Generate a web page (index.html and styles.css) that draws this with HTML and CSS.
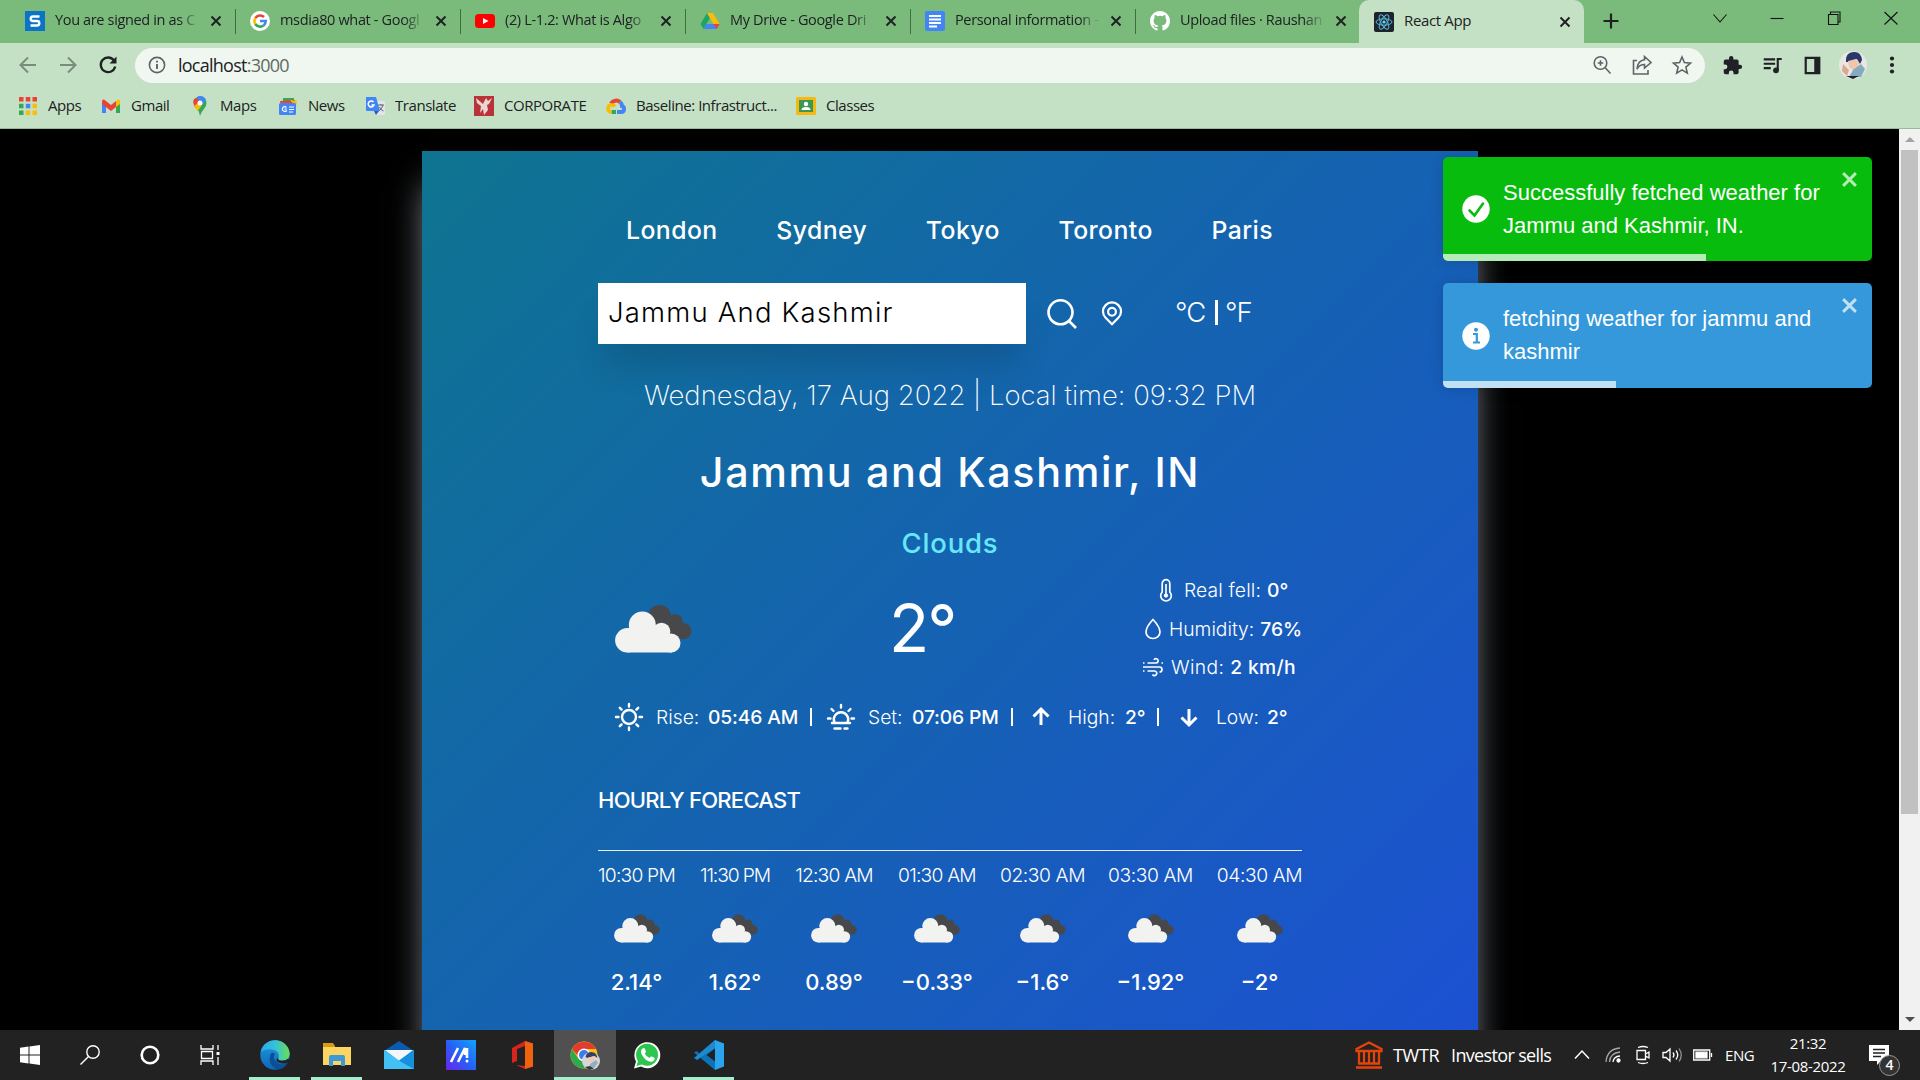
FILE: index.html
```html
<!DOCTYPE html>
<html lang="en">
<head>
<meta charset="utf-8">
<title>React App</title>
<link rel="stylesheet" href="styles.css">
</head>
<body>
<svg class="defs" width="0" height="0">
  <defs>
    <symbol id="x" viewBox="0 0 12 12"><path d="M1.500 1.500l9 9M10.500 1.500l-9 9" stroke="currentColor" stroke-width="2" fill="none"/></symbol>
    <symbol id="clouds" viewBox="0 0 77 48">
      <g fill="#48484a"><circle cx="44.500" cy="11.500" r="11.500"/><circle cx="60.500" cy="16" r="7"/><circle cx="68.500" cy="26.200" r="8"/><path d="M40 12h22l7 6v16H50z"/></g>
      <g fill="#f2f2f0"><circle cx="12.300" cy="35.300" r="12.200"/><circle cx="27.300" cy="20" r="13.500"/><circle cx="46.500" cy="26.500" r="8.800"/><circle cx="56" cy="38" r="9.500"/><path d="M12 47.500V24l14-5 15 2 8 8 8 8v10.500z"/></g>
    </symbol>
    <linearGradient id="edgeA" x1="0" y1="0" x2="1" y2="0"><stop offset="0" stop-color="#2aa9e8"/><stop offset=".5" stop-color="#35c1d9"/><stop offset="1" stop-color="#6bdd55"/></linearGradient>
    <linearGradient id="edgeB" x1="0" y1="0" x2="0" y2="1"><stop offset="0" stop-color="#1b9de2"/><stop offset="1" stop-color="#0f66b8"/></linearGradient>
    <linearGradient id="mBg" x1="0" y1="1" x2="1" y2="0"><stop offset="0" stop-color="#6a22ee"/><stop offset=".5" stop-color="#2463f5"/><stop offset="1" stop-color="#14a4fb"/></linearGradient>
  </defs>
</svg>

<header class="tabs">
  <div class="tab">
    <svg class="fav" viewBox="0 0 20 20"><path fill="#0b74c9" d="M0 0h20v20H0z"/><path d="M14.500 5.500H8q-2.300 0-2.300 2.200T8 10h4q2.300 0 2.300 2.200T12 14.500H5.500" fill="none" stroke="#fff" stroke-width="2.400"/></svg>
    <span class="tab-title">You are signed in as C</span><svg class="tab-x"><use href="#x"/></svg>
  </div>
  <div class="tab">
    <svg class="fav" viewBox="0 0 20 20"><circle cx="10" cy="10" r="10" fill="#fff"/><g fill="none" stroke-width="2.600"><path d="M5.400 7A5.700 5.700 0 0 1 14 6" stroke="#ea4335"/><path d="M5.300 13A5.700 5.700 0 0 1 5.400 7" stroke="#fbbc05"/><path d="M13.600 14.400A5.700 5.700 0 0 1 5.300 13" stroke="#34a853"/><path d="M10 10h5.700a5.700 5.700 0 0 1-2.100 4.400" stroke="#4285f4"/></g></svg>
    <span class="tab-title">msdia80 what - Googl</span><svg class="tab-x"><use href="#x"/></svg>
  </div>
  <div class="tab">
    <svg class="fav" viewBox="0 0 20 20"><rect y="3" width="20" height="14" rx="3.500" fill="#f00"/><path d="M8 7l5.500 3L8 13z" fill="#fff"/></svg>
    <span class="tab-title">(2) L-1.2: What is Algo</span><svg class="tab-x"><use href="#x"/></svg>
  </div>
  <div class="tab">
    <svg class="fav" viewBox="0 0 20 20"><path d="M7 2L.5 13l3 5L10 7z" fill="#1fa463"/><path d="M7 2h6l6.500 11h-6z" fill="#fbbc05"/><path d="M3.500 18l3-5h13l-3 5z" fill="#4285f4"/><path d="M16.500 18l-3-5h6z" fill="#ea4335"/></svg>
    <span class="tab-title">My Drive - Google Dri</span><svg class="tab-x"><use href="#x"/></svg>
  </div>
  <div class="tab">
    <svg class="fav" viewBox="0 0 20 20"><rect width="20" height="20" rx="2" fill="#4285f4"/><path d="M4 5h12M4 8.500h12M4 12h12M4 15.500h8" stroke="#fff" stroke-width="1.800"/></svg>
    <span class="tab-title">Personal information -</span><svg class="tab-x"><use href="#x"/></svg>
  </div>
  <div class="tab tab-last">
    <svg class="fav" viewBox="0 0 16 16"><path fill="#fff" d="M8 0C3.580 0 0 3.580 0 8c0 3.540 2.290 6.530 5.470 7.590.4.070.55-.17.55-.38 0-.19-.01-.82-.01-1.490-2.010.37-2.530-.49-2.690-.94-.09-.23-.48-.94-.82-1.130-.28-.15-.68-.52-.01-.53.63-.01 1.080.58 1.230.82.72 1.210 1.870.87 2.330.66.070-.52.28-.87.51-1.070-1.780-.2-3.640-.89-3.640-3.950 0-.87.31-1.590.82-2.150-.08-.2-.36-1.020.08-2.120 0 0 .67-.21 2.200.82a7.600 7.600 0 0 1 4 0c1.530-1.040 2.200-.82 2.200-.82.44 1.100.16 1.920.08 2.120.51.56.82 1.270.82 2.150 0 3.070-1.870 3.750-3.650 3.950.29.25.54.73.54 1.480 0 1.070-.01 1.930-.01 2.200 0 .21.15.46.55.38A8 8 0 0 0 16 8c0-4.420-3.580-8-8-8z"/></svg>
    <span class="tab-title">Upload files · Raushan</span><svg class="tab-x"><use href="#x"/></svg>
  </div>
  <div class="tab active">
    <svg class="fav" viewBox="0 0 20 20"><rect width="20" height="20" rx="2" fill="#20232a"/><g fill="none" stroke="#53b9dc" stroke-width="1"><ellipse cx="10" cy="10" rx="8" ry="3.200"/><ellipse cx="10" cy="10" rx="8" ry="3.200" transform="rotate(60 10 10)"/><ellipse cx="10" cy="10" rx="8" ry="3.200" transform="rotate(120 10 10)"/></g><circle cx="10" cy="10" r="1.600" fill="#61dafb"/></svg>
    <span class="tab-title whole">React App</span><svg class="tab-x"><use href="#x"/></svg>
  </div>
  <svg class="new-tab" viewBox="0 0 16 16"><path d="M8 .5v15M.5 8h15" stroke="#202124" stroke-width="2.200"/></svg>
  <div class="win-controls">
    <svg viewBox="0 0 16 16"><path d="M1.500 4.500L8 12l6.500-7.500" /></svg>
    <svg viewBox="0 0 16 16"><path d="M1.500 8.500h13"/></svg>
    <svg viewBox="0 0 16 16"><path d="M2.500 4.500h9.500v10H2.500zM4.500 4.500v-2.500h9.500v10h-2"/></svg>
    <svg viewBox="0 0 16 16"><path d="M1.500 2l13 12.500M14.500 2l-13 12.500"/></svg>
  </div>
</header>

<div class="toolbar">
  <svg class="nav-ic dim" viewBox="0 0 20 20"><path d="M18 10H3M10 2.500L2.500 10l7.500 7.500"/></svg>
  <svg class="nav-ic dim" viewBox="0 0 20 20"><path d="M2 10h15M10 2.500l7.500 7.500-7.500 7.500"/></svg>
  <svg class="nav-ic" viewBox="0 0 20 20"><path d="M16 5.500A7.300 7.300 0 1 0 17.200 11.500" stroke-width="2.300"/><path d="M18.500 1.500v7h-7z" fill="#202124" stroke="none"/></svg>
  <div class="omnibox">
    <svg class="info" viewBox="0 0 18 18"><circle cx="9" cy="9" r="7.600" fill="none" stroke="#5f6368" stroke-width="1.600"/><path d="M9 8v5M9 4.800v1.800" stroke="#5f6368" stroke-width="1.900"/></svg>
    <span class="url">localhost<span>:3000</span></span>
    <svg class="omni-ic" viewBox="0 0 20 20"><circle cx="8.500" cy="8" r="6.300"/><path d="M13 12.500l5.500 6M8.500 5.200v5.600M5.700 8h5.600"/></svg>
    <svg class="omni-ic" viewBox="0 0 20 20"><path d="M5 5.500H1.500V19h14.500v-4" /><path d="M12.500 1.500L19 7.500l-6.500 5.500v-3.500q-5 0-7.500 4.500.8-8.500 7.500-9.200z"/></svg>
    <svg class="omni-ic" viewBox="0 0 20 20"><path d="M10 2l2.400 5.600 6.100.5-4.600 4 1.400 6L10 14.900 4.700 18.100l1.400-6-4.600-4 6.100-.5z"/></svg>
  </div>
  <svg class="ext puzzle" viewBox="0 0 24 24"><path fill="#202124" d="M20.500 11H19V7a2 2 0 0 0-2-2h-4V3.500a2.500 2.500 0 0 0-5 0V5H4a2 2 0 0 0-2 2v3.800h1.500a2.700 2.700 0 0 1 0 5.400H2V20a2 2 0 0 0 2 2h3.800v-1.500a2.700 2.700 0 0 1 5.400 0V22H17a2 2 0 0 0 2-2v-4h1.500a2.500 2.500 0 0 0 0-5z"/></svg>
  <svg class="ext" viewBox="0 0 24 24"><path d="M2 5h13M2 10h13M2 15h8" stroke="#202124" stroke-width="2.300"/><path d="M18 17V4.500h4.500" fill="none" stroke="#202124" stroke-width="2.400"/><circle cx="16" cy="17.500" r="3.300" fill="#202124"/></svg>
  <svg class="ext" viewBox="0 0 24 24"><path d="M3 2h18v20H3zM5.500 4.500v15H14v-15z" fill="#202124" fill-rule="evenodd"/></svg>
  <svg class="avatar" viewBox="0 0 28 28"><circle cx="14" cy="14" r="14" fill="#e9e6e4"/><path d="M7 11Q6 2 14 1t9 8l-2 4-3-5-9 3z" fill="#28386b"/><path d="M9 10l8-2 3 4-1 5-4 3-5-4z" fill="#efc6a9"/><path d="M14 19l8-6 4 5-4 8H10z" fill="#85abc0"/><path d="M4 13l6 6-2 6-5-5z" fill="#d9a98f"/><path d="M7 25h13l-6 3z" fill="#20242c"/></svg>
  <svg class="dots" viewBox="0 0 6 20"><circle cx="3" cy="3.500" r="2.100"/><circle cx="3" cy="10" r="2.100"/><circle cx="3" cy="16.500" r="2.100"/></svg>
</div>

<nav class="bookmarks">
  <a class="w-apps"><svg viewBox="0 0 20 20"><g fill="#ea4335"><path d="M1 1h4.500v4.500H1zM7.800 1h4.500v4.500H7.800zM14.500 1H19v4.500h-4.500z"/></g><path fill="#34a853" d="M1 7.800h4.500v4.500H1zM1 14.500h4.500V19H1z"/><path fill="#4285f4" d="M7.800 7.800h4.500v4.500H7.800z"/><path fill="#fbbc05" d="M14.500 7.800H19v4.500h-4.500zM7.800 14.500h4.500V19H7.800zM14.500 14.500H19V19h-4.500z"/></svg><span>Apps</span></a>
  <a class="w-gmail"><svg viewBox="0 0 20 20"><path d="M1 5v12h4V9z" fill="#4285f4"/><path d="M19 5v12h-4V9z" fill="#34a853"/><path d="M15 5l2-1.500q2-.5 2 2V8l-4 3z" fill="#fbbc04"/><path d="M1 8V5.500q0-2.500 2-2L10 9l5-4v6l-5 4z" fill="#ea4335"/></svg><span>Gmail</span></a>
  <a class="w-maps"><svg viewBox="0 0 20 20"><path d="M10 20Q9 14 5 10.500 2 4 6.500 1.500 10-1 14 2q5 5 0 11-3 3-4 7z" fill="#34a853"/><path d="M4 9Q2 4 5 2.500l10 0Q9 7 5.500 12z" fill="#ea4335"/><path d="M7 1q6-3 9 3l-5 6z" fill="#4285f4"/><path d="M4.500 10l4-4 3 4L7.500 15z" fill="#fbbc04"/><circle cx="10" cy="7" r="2.500" fill="#fff"/></svg><span>Maps</span></a>
  <a class="w-news"><svg viewBox="0 0 20 20"><path d="M5 2h11v6H5z" fill="#34a853"/><path d="M2 5l15-1 1 6H3z" fill="#ea4335"/><path d="M12 4l7 1-1 6z" fill="#fbbc04"/><rect x="1" y="7" width="17" height="12" rx="1.500" fill="#4285f4"/><path d="M11 11h5M11 13.500h5M11 16h4M9 13H6.500M8.500 11.300a2.400 2.400 0 1 0 .3 3" fill="none" stroke="#fff" stroke-width="1.200"/></svg><span>News</span></a>
  <a class="w-trans"><svg viewBox="0 0 20 20"><path d="M8 5h11q1 0 1 1v12q0 1-1 1h-7z" fill="#e1e4e8"/><path d="M1 1h10l4 14H2q-1 0-1-1z" fill="#4285f4"/><path d="M9 15h5l-3 4z" fill="#2a56c6"/><path d="M8.500 6A3 3 0 1 0 9 9H6.500" fill="none" stroke="#fff" stroke-width="1.500"/><path d="M13 9h6M16 8v1.500M18 9q-1 4-4 6M14.500 11q1 3 4 4" fill="none" stroke="#667" stroke-width="1"/></svg><span>Translate</span></a>
  <a class="w-corp"><svg viewBox="0 0 20 20"><path d="M0 0h20v20H0z" fill="#b93438"/><path d="M2 2l7 6 1-2 2-4 2 3 4-3-3 6-2 1 1 5-4 5-1-6-3 4 1-7-4-3z" fill="#ecd5d3"/></svg><span>CORPORATE</span></a>
  <a class="w-base"><svg viewBox="0 0 20 20"><g fill="none" stroke-width="4"><path d="M5 7.500A6 6 0 0 1 14 6" stroke="#ea4335"/><path d="M14 6q2 1.500 2 4 2 .5 2 3 0 3-3 3h-4" stroke="#4285f4"/><path d="M10 16H5.500" stroke="#34a853"/><path d="M5.500 16Q2 16 2 12.500T6 9q2 0 3 1.500" stroke="#fbbc05" stroke-width="3.600"/></g></svg><span>Baseline: Infrastruct...</span></a>
  <a><svg viewBox="0 0 20 20"><rect y="1" width="20" height="18" rx="1.500" fill="#f5b912"/><path d="M3 4h14v12H3z" fill="#3c9850"/><circle cx="10" cy="8" r="2.200" fill="#fff"/><path d="M5.500 14q0-3 4.500-3t4.500 3z" fill="#fff"/></svg><span>Classes</span></a>
</nav>

<div class="viewport">
  <main class="page">
    <section class="card">
      <div class="cities"><button>London</button><button>Sydney</button><button>Tokyo</button><button>Toronto</button><button>Paris</button></div>
      <div class="search">
        <div class="field">Jammu And Kashmir</div>
        <svg class="glass" viewBox="0 0 30 30"><circle cx="13.500" cy="13.300" r="12"/><path d="M22 22l7 7"/></svg>
        <svg class="pin" viewBox="0 0 20 24"><path d="M10 22.300L3.600 15.800a9 9 0 1 1 12.800 0z"/><circle cx="10" cy="9.800" r="3.900"/></svg>
        <div class="units"><span>°C</span><i></i><span>°F</span></div>
      </div>
      <p class="date">Wednesday, 17 Aug 2022 | Local time: 09:32 PM</p>
      <h1 class="place">Jammu and Kashmir, IN</h1>
      <p class="sky">Clouds</p>
      <div class="now">
        <svg class="now-icon"><use href="#clouds"/></svg>
        <p class="temp">2<span>°</span></p>
        <div class="details">
          <p class="feel"><svg viewBox="0 0 20 22"><path d="M6.200 13V4.500a3.800 3.800 0 0 1 7.600 0V13a5.300 5.300 0 1 1-7.600 0z"/><path d="M10 5v11"/><circle cx="10" cy="16.500" r="1.700" fill="#fff" stroke-width="1"/></svg><span>Real fell:</span><b>0°</b></p>
          <p class="hum"><svg viewBox="0 0 20 22"><path d="M10 1.500Q17 9 17 14a7 6.500 0 0 1-14 0Q3 9 10 1.500z"/></svg><span>Humidity:</span><b>76%</b></p>
          <p class="wind"><svg viewBox="0 0 22 22"><path d="M1 7h1.500M5.500 7h8.500a2.200 2.200 0 1 0-2-3.200M1 11h16.500a2.300 2.300 0 1 1 0 5M19.500 7h1.500M1 15h1.500M5.500 15h7a2.300 2.300 0 1 1-2 3.500"/></svg><span>Wind:</span><b>2 km/h</b></p>
        </div>
      </div>
      <div class="stats">
        <svg viewBox="0 0 28 28"><circle cx="14" cy="14" r="7"/><path d="M14 1v2.500M14 24.500V27M1 14h2.500M24.500 14H27M4.800 4.800l1.800 1.800M21.400 21.400l1.800 1.800M4.800 23.200l1.800-1.800M21.400 6.600l1.800-1.800"/></svg>
        <span>Rise:</span><b class="am">05:46 AM</b><i></i>
        <svg viewBox="0 0 28 28"><path d="M7.500 19.500a7.200 7.200 0 1 1 13 0M5 20h18M7.500 25.500h6M17.500 25.500h3M14 2v2.500M1 15.500h2.500M24.500 15.500H27M4.500 6l2 2M23.500 6l-2 2"/></svg>
        <span>Set:</span><b class="pm">07:06 PM</b><i></i>
        <svg class="arrow" viewBox="0 0 28 28"><path d="M10 22V7M2.500 13.500L10 6l7.500 7.500"/></svg>
        <span>High:</span><b>2°</b><i></i>
        <svg class="arrow" viewBox="0 0 28 28"><path d="M10 6v15M2.500 14.500L10 22l7.500-7.500"/></svg>
        <span>Low:</span><b>2°</b>
      </div>
      <h2 class="heading">HOURLY FORECAST</h2>
      <div class="hours">
        <div><span>10:30 PM</span><svg><use href="#clouds"/></svg><b>2.14°</b></div>
        <div><span>11:30 PM</span><svg><use href="#clouds"/></svg><b>1.62°</b></div>
        <div><span>12:30 AM</span><svg><use href="#clouds"/></svg><b>0.89°</b></div>
        <div><span>01:30 AM</span><svg><use href="#clouds"/></svg><b>−0.33°</b></div>
        <div><span>02:30 AM</span><svg><use href="#clouds"/></svg><b>−1.6°</b></div>
        <div><span>03:30 AM</span><svg><use href="#clouds"/></svg><b>−1.92°</b></div>
        <div><span>04:30 AM</span><svg><use href="#clouds"/></svg><b>−2°</b></div>
      </div>
    </section>
  </main>
  <div class="scrollbar"><i class="up"></i><div class="thumb"></div><i class="down"></i></div>
  <aside class="toasts">
    <div class="toast ok">
      <svg class="t-ic" viewBox="0 0 28 28"><circle cx="14" cy="14" r="13.700" fill="#fff"/><path d="M7.500 15.500l5 5 8.500-12" fill="none" stroke="#07bc0c" stroke-width="2.600" stroke-linecap="round"/></svg>
      <p>Successfully fetched weather for<br>Jammu and Kashmir, IN.</p>
      <svg class="t-x"><use href="#x"/></svg><div class="bar" style="width:263px"></div>
    </div>
    <div class="toast note">
      <svg class="t-ic" viewBox="0 0 28 28"><circle cx="14" cy="14" r="13.700" fill="#fff"/><circle cx="14" cy="7.800" r="2" fill="#3498db"/><path d="M11 12h3.800v8M11 20.500h7" fill="none" stroke="#3498db" stroke-width="2.200"/></svg>
      <p>fetching weather for jammu and<br>kashmir</p>
      <svg class="t-x"><use href="#x"/></svg><div class="bar" style="width:173px"></div>
    </div>
  </aside>
</div>

<footer class="taskbar">
  <div class="slot"><svg viewBox="0 0 20 20"><path fill="#fff" d="M0 2.800L8.500 1.500v8H0zM9.500 1.400L20 0v9.500H9.500zM0 10.500h8.500v8L0 17.300zM9.500 10.500H20V20L9.500 18.600z"/></svg></div>
  <div class="slot"><svg viewBox="0 0 20 20"><circle cx="13" cy="7" r="6.200" fill="none" stroke="#fff" stroke-width="1.400"/><path d="M8.500 11.500L.5 19.500" stroke="#fff" stroke-width="1.500"/></svg></div>
  <div class="slot"><svg viewBox="0 0 20 20"><circle cx="10" cy="10" r="8.300" fill="none" stroke="#fff" stroke-width="2.600"/></svg></div>
  <div class="slot"><svg viewBox="0 0 20 20"><path d="M1 0v4h12V0M1 20v-4h12v4M1.500 6.500h11v7h-11zM18 0v5M18 12v8" fill="none" stroke="#fff" stroke-width="1.300"/><path d="M16.500 7h3v3h-3z" fill="#fff"/></svg></div>
  <div class="slot app run first"><svg viewBox="0 0 30 30"><circle cx="15" cy="15" r="14.700" fill="url(#edgeB)"/><path d="M.6 12A14.700 14.700 0 0 1 29.700 14Q29 20.500 22 20.500 17 20 18.500 17.500 20 11 12 9.500 5 8.500.6 12z" fill="url(#edgeA)"/><path d="M10.500 14Q7 24 16 29q8 .5 11.500-6-6 3-10.500-.5-5-4-2-9Q12 12 10.500 14z" fill="#0c4f96"/><path d="M18.500 17.500Q16.500 20.500 22 20.800q4 0 6.500-2l1.500 2-3 2.300q-6 1.500-10-1.500-1.500-2.500 1.500-4.100z" fill="#222"/></svg></div>
  <div class="slot app run"><svg viewBox="0 0 30 30"><path d="M1 3h10l2 3v4H1z" fill="#d99b10"/><path d="M1 7h28v18H1z" fill="#fcd462"/><path d="M7 26V17q0-2 2-2h12q2 0 2 2v9h-4v-5h-8v5z" fill="#3f98d6"/></svg></div>
  <div class="slot app"><svg viewBox="0 0 30 30"><path d="M0 11L15 1l15 10z" fill="#0a5aad"/><path d="M0 10h30v19H0z" fill="#1d9de2"/><path d="M1 10h28L15 21z" fill="#f4f6f8"/><path d="M0 10l15 10.500L30 29H0z" fill="#43c0f4"/><path d="M30 10v19L15 20.500z" fill="#168fdc"/></svg></div>
  <div class="slot app"><svg viewBox="0 0 30 30"><path d="M0 0h30v30H0z" fill="url(#mBg)"/><path d="M5 22L12 8M12 22l7-14v7M21 8v10" fill="none" stroke="#fff" stroke-width="2.600"/><circle cx="21" cy="21" r="1.500" fill="#fff"/></svg></div>
  <div class="slot app"><svg viewBox="0 0 30 30"><path d="M4 8L17 1l8 2.500v23L17 29 8 25l9 1V6L9 9v12l-5 2z" fill="#d5251c"/><path d="M17 1l8 2.500v23L17 29z" fill="#f1620f"/></svg></div>
  <div class="slot app run on"><svg viewBox="0 0 30 30"><circle cx="14" cy="15" r="13.500" fill="#fbc116"/><path d="M2 9A13.500 13.500 0 0 1 26 9H14l-5 8z" fill="#e33b2e"/><path d="M2 9A13.500 13.500 0 0 0 14 28.500l5-9H9z" fill="#2da94f"/><circle cx="14" cy="15" r="6.500" fill="#fff"/><circle cx="14" cy="15" r="5" fill="#3b7ded"/><circle cx="21" cy="21" r="9" fill="#d9d6d8"/><path d="M15.500 17q1-5 6-5t6 6l-3-2-7 2z" fill="#33405f"/><path d="M17 18l7-2 1 5-4 3z" fill="#f0cbb4"/><path d="M20 24l6-4 2 3-4 5-4 1z" fill="#8fb0c4"/><path d="M15 27l5-1 4 3-5 1z" fill="#343a43"/></svg></div>
  <div class="slot app"><svg viewBox="0 0 30 30"><path d="M2 28.500l2-7A13 13 0 1 1 9 26.500z" fill="#fff"/><path d="M4.500 26l1.500-5A11 11 0 1 1 10 24.500z" fill="#2cc64f"/><path d="M10 9q2-2 3 0l1 3-1.300 1.800q2 3.200 4.800 4.200l1.700-1.800 3.300 1.500q.5 3-3 4Q14 22 10 15q-2-4 0-6z" fill="#fff"/></svg></div>
  <div class="slot app run"><svg viewBox="0 0 30 30"><path d="M21 0L6 14 2.500 11 0 12.500 21 30z" fill="#0d73b9"/><path d="M0 18L21 0v8L3 20z" fill="#1b8ad2"/><path d="M21 0l9 3.500v23L21 30z" fill="#2ba4ee"/><path d="M21 8.500v13L12.500 15z" fill="#222"/></svg></div>
  <div class="tray">
    <svg class="bank" viewBox="0 0 28 28"><path d="M1.500 10V8L14 1.500 26.500 8v2zM4 10.500v12M9 10.500v12M14 10.500v12M19 10.500v12M24 10.500v12M3 22.500h22M1 26.500h26" /></svg>
    <span class="news">TWTR</span><span class="news sells">Investor sells</span>
    <svg class="chev" viewBox="0 0 16 16"><path d="M1 11.500L8 4l7 7.500" stroke-width="1.500"/></svg>
    <svg class="wifi" viewBox="0 0 16 16"><path d="M1 15Q2 2 15 1M4.500 15Q5 6 15 5" opacity=".6"/><path d="M8 15q.5-5.500 7-6"/><circle cx="13.500" cy="13.500" r="1.500" fill="#fff"/></svg>
    <svg class="meet" viewBox="0 0 16 18"><path d="M2 4.500h8.500v9H2zM10.500 8l3.500-2v6l-3.500-2M3 1.500q5-2 10 0M3 16.500q5 2 10 0"/></svg>
    <svg class="vol" viewBox="0 0 20 16"><path d="M1 5.500h3L8 2v12l-4-3.500H1zM11 5.500q2 2.500 0 5M14 3.500q3.500 4.500 0 9"/><path d="M17 1.500q4.500 6.500 0 13" opacity=".5"/></svg>
    <svg class="bat" viewBox="0 0 20 12"><path d="M.7 1h16v10H.7zM18.500 4v4"/><path d="M3 3.200h11v5.600H3z" fill="#fff"/></svg>
    <span class="lang">ENG</span>
    <div class="clock"><span>21:32</span><span class="day">17-08-2022</span></div>
    <div class="action"><svg viewBox="0 0 20 20"><path d="M0 0h20v16h-8l-4 4v-4H0z" fill="#fff"/><path d="M4 4.500h12M4 8h12M4 11.500h8" stroke="#222" stroke-width="1.300"/></svg><span>4</span></div>
  </div>
</footer>
</body>
</html>
```
FILE: styles.css
```css
*{box-sizing:border-box;margin:0;padding:0}
html,body{height:100%}
body{width:1920px;height:1080px;overflow:hidden;background:#000;display:flex;flex-direction:column;font-family:"Open Sans","Noto Sans",sans-serif;color:#202124}
svg{display:block;flex:none;overflow:visible}
.defs{position:absolute}

.tabs{height:43px;flex:none;background:#7abb7c;display:flex;padding-left:10px}
.tab{width:225px;height:42px;display:flex;align-items:center;padding-left:15px;position:relative;flex:none}
.tab::after{content:"";position:absolute;right:-1px;top:9px;width:1px;height:25px;background:#3f6e43}
.tab-last::after,.active::after{display:none}
.active{background:#c5e1c5;height:43px;border-radius:10px 10px 0 0;margin-left:-1px}
.fav{width:20px;height:20px}
.tab-title{margin:-3px 0 0 10px;width:147px;overflow:hidden;white-space:nowrap;font-size:14.5px;letter-spacing:-.35px;-webkit-mask-image:linear-gradient(90deg,#000 84%,transparent 99%);mask-image:linear-gradient(90deg,#000 84%,transparent 99%)}
.whole{-webkit-mask-image:none;mask-image:none;font-size:15px}
.tab-x{width:12px;height:12px;margin-left:8px}
.new-tab{width:16px;height:16px;margin:13px 0 0 19px}
.win-controls{display:flex;margin-left:93px;gap:41px;padding-top:10px}
.win-controls svg{width:16px;height:16px;fill:none;stroke:#111;stroke-width:1.1}

.toolbar{height:44px;flex:none;background:#c5e1c5;display:flex;align-items:center;padding-left:18px}
.nav-ic{width:20px;height:20px;margin-right:20px;fill:none;stroke:#202124;stroke-width:2}
.dim{opacity:.45}
.omnibox{width:1570px;height:35px;margin-left:-3px;border-radius:18px;background:#f0f7f0;display:flex;align-items:center;padding:0 13px}
.info{width:18px;height:18px}
.url{font-size:18px;letter-spacing:-.75px;margin-left:12px;flex:1}
.url span{color:#5f6b62}
.omni-ic{width:20px;height:20px;margin-left:20px;fill:none;stroke:#5f6368;stroke-width:1.6}
.ext{width:21px;height:21px;margin-left:19px}
.puzzle{margin-left:17px}
.avatar{width:28px;height:28px;margin-left:16px}
.dots{width:6px;height:20px;margin-left:22px;fill:#202124}

.bookmarks{height:42px;flex:none;background:#c5e1c5;border-bottom:1px solid #9fb5a0;display:flex;padding-left:18px}
.bookmarks a{display:flex;align-items:center;gap:10px;font-size:15px;letter-spacing:-.45px;height:38px;white-space:nowrap}
.bookmarks svg{width:20px;height:20px}
.bookmarks span{margin-top:-2px}
.w-apps{width:83px}.w-gmail{width:89px}.w-maps{width:88px}.w-news{width:87px}.w-trans{width:109px}.w-corp{width:132px}.w-base{width:190px}

.viewport{height:901px;flex:none;display:flex;position:relative;overflow:hidden}
.page{width:1899px;padding:22px 0 0 422px;overflow:hidden;background:#000}
.card{width:1056px;height:1050px;padding:47px 176px 0;background:linear-gradient(to bottom right,#0e7490,#1d4ed8);box-shadow:0 27px 34px -7px #9ca3af;color:#fff;font-family:Inter,"Noto Sans",sans-serif}
.cities{height:64px;display:flex;justify-content:space-between;align-items:center;padding:0 29px 0 28px}
.cities button{border:0;background:none;color:#fff;font:500 24.75px Inter,sans-serif;letter-spacing:.45px}
.search{height:61px;margin-top:21px;display:flex;align-items:center}
.field{width:428px;height:61px;background:#fff;color:#000;font-size:27.5px;font-weight:300;line-height:59px;padding-left:10px;box-shadow:0 27px 34px -7px rgba(0,0,0,.14);letter-spacing:1.2px}
.glass{width:30px;height:30px;margin-left:21px;fill:none;stroke:#fff;stroke-width:2.6}
.pin{width:20px;height:24px;margin-left:25px;fill:none;stroke:#fff;stroke-width:2.2}
.units{display:flex;align-items:center;margin-left:53px;font-size:27.5px;font-weight:300;margin-top:-3px}
.units span{width:33px;letter-spacing:-1px}
.units i{width:3px;height:25px;background:#fff;margin:0 7px 0 7px}
.date{height:50px;line-height:50px;margin-top:26px;font-size:27.5px;font-weight:200;text-align:center;white-space:nowrap}
.place{height:54px;line-height:54px;margin-top:25px;font-size:41.25px;font-weight:500;text-align:center;white-space:nowrap;letter-spacing:1.65px}
.sky{height:40px;line-height:40px;margin-top:24px;color:#67e8f9;font-size:27.5px;font-weight:500;text-align:center;letter-spacing:.8px}
.now{height:117px;margin-top:7px;display:flex;align-items:center}
.now-icon{width:77px;height:48px;margin-left:17px}
.temp{width:200px;margin:-2px 0 0 197px;font-size:66px;line-height:80px;font-weight:400;letter-spacing:-2px}
.details{width:160px;margin-left:53px;font-size:19.25px;font-weight:300}
.details p{display:flex;align-items:center;height:38.5px;white-space:nowrap}
.details svg{width:22px;height:22px;margin-right:5px;fill:none;stroke:#fff;stroke-width:1.7}
b{font-weight:500}
.details b{margin-left:6px}
.details .feel{padding-left:13px;letter-spacing:.15px}
.feel svg,.wind svg{margin-right:7px}
.wind{letter-spacing:.35px}
.stats{height:34px;margin-top:13px;padding-left:17px;display:grid;align-items:center;grid-template-columns:41px 52px 102px 17px 41px 44px 99px 20px 37px 57px 32px 22px 37px 51px 40px;font-size:19.25px;font-weight:300;white-space:nowrap}
.stats svg{width:28px;height:28px;fill:none;stroke:#fff;stroke-width:2.4;stroke-linecap:round}
.stats .arrow{stroke-width:3;stroke-linecap:butt}
.stats b{letter-spacing:-.15px}
.stats i{width:1.5px;height:18px;background:#fff}
.heading{font-size:22px;font-weight:500;height:40px;line-height:40px;margin-top:46px;letter-spacing:-.75px}
.hours{border-top:1px solid #e8edf4;margin-top:30px;padding-top:10px;display:grid;justify-content:space-between;grid-template-columns:77px 71px 78px 79px 83px 84px 85px}
.hours div{display:flex;flex-direction:column;align-items:center}
.hours span{font-size:19.25px;line-height:29px;font-weight:300;white-space:nowrap;letter-spacing:-.4px}
.hours div:nth-child(-n+4) span{letter-spacing:-.8px}
.hours div:nth-child(2) span{letter-spacing:-1.1px}
.hours svg{width:46px;height:29px;margin-top:24px}
.hours b{font-size:22px;line-height:33px;margin-top:23px}

.scrollbar{width:21px;background:#f1f1f1;display:flex;flex-direction:column;align-items:center;padding:8px 0}
.up,.down{border:5px solid transparent;border-top:0;border-bottom:5px solid #a3a3a3}
.down{border-top:5px solid #505050;border-bottom:0;margin-top:auto}
.thumb{width:17px;height:664px;background:#c1c1c1;margin-top:8px}

.toasts{position:absolute;left:1443px;top:28px;width:429px;display:flex;flex-direction:column;gap:22px;font-family:"Liberation Sans",Arial,sans-serif;color:#fff}
.toast{position:relative;height:104px;border-radius:5px;overflow:hidden;display:flex;align-items:center;padding-left:19px;font-size:22px;line-height:33px;box-shadow:0 1px 14px rgba(0,0,0,.15)}
.ok{background:#07bc0c}.note{background:#3498db;height:105px}
.t-ic{width:28px;height:28px;margin-right:13px}
.toast p{white-space:nowrap}
.note p{margin-top:-2px}
.t-x{position:absolute;right:14px;top:14px;width:17px;height:17px;opacity:.7}
.bar{position:absolute;left:0;bottom:0;height:7px;background:rgba(255,255,255,.7)}

.taskbar{height:50px;flex:none;background:#222;display:flex;color:#fff}
.slot{width:60px;display:flex;align-items:center;justify-content:center;flex:none}
.slot svg{width:20px;height:20px}
.app{width:62px;position:relative}
.app svg{width:30px;height:30px}
.first{margin-left:4px}
.run::after{content:"";position:absolute;bottom:0;left:5px;width:51px;height:3px;background:#a4efcb}
.on{background:#505050}
.on::after{left:0;width:62px}
.tray{margin-left:615px;flex:1;display:flex;align-items:center;white-space:nowrap}
.tray svg{fill:none;stroke:#fff;stroke-width:1.3}
.tray .bank{width:28px;height:28px;stroke:#e2440b;stroke-width:2.3}
.news{font-size:18px;margin-left:10px;width:49px;letter-spacing:-.3px}
.sells{width:102px;margin-left:9px;letter-spacing:-.65px;margin-right:1px}
.chev{width:16px;height:16px;margin-left:20px}
.wifi{width:16px;height:16px;margin-left:15px}
.meet{width:16px;height:18px;margin-left:14px}
.vol{width:20px;height:16px;margin-left:11px}
.bat{width:20px;height:12px;margin-left:11px}
.lang{font-size:15px;width:30px;margin-left:12px;letter-spacing:-.4px}
.clock{width:76px;margin-left:15px;display:flex;flex-direction:column;align-items:center;font-size:15px;line-height:23px;letter-spacing:-.35px}
.action{position:relative;margin-left:23px}
.action svg{width:20px;height:20px;stroke:none}
.action span{position:absolute;left:10px;top:10px;width:21px;height:21px;border:1px solid #999;border-radius:50%;background:#333;font-size:14px;font-weight:600;line-height:18px;text-align:center}
```
